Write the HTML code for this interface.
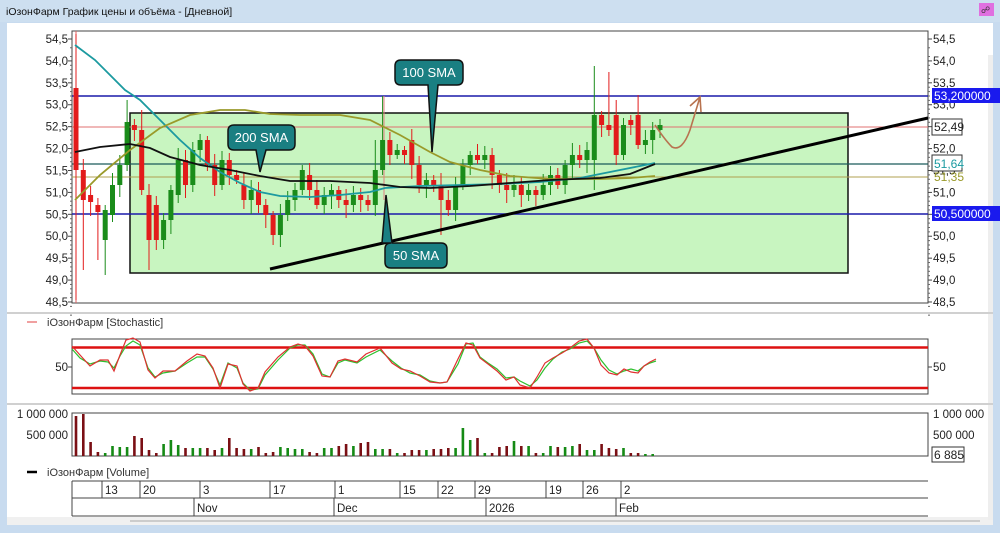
<!DOCTYPE html>
<html><head><meta charset="utf-8"><style>
body{margin:0;width:1000px;height:533px;overflow:hidden;background:#c8dbef;font-family:"Liberation Sans","Noto Sans CJK JP",sans-serif}
svg{display:block}
text{font-family:"Liberation Sans","DejaVu Sans",sans-serif}
</style></head><body>
<svg id="s" width="1000" height="533" viewBox="0 0 1000 533" xmlns="http://www.w3.org/2000/svg">
<rect x="0" y="0" width="1000" height="533" fill="#c8dbef"/>
<rect x="0" y="0" width="1000" height="22" fill="#cddff0"/>
<text x="6" y="15" font-size="10.5" fill="#111">iОзонФарм График цены и объёма - [Дневной]</text>
<rect x="979" y="3" width="15" height="13" fill="#e070e0"/>
<text x="981" y="13" font-size="9" fill="#333">☍</text>
<rect x="7" y="23" width="986" height="500" fill="#fff"/>
<rect x="7" y="517" width="986" height="8" fill="#f0f0f0"/>
<line x1="130" y1="521" x2="980" y2="521" stroke="#ccc" stroke-width="2"/>
<rect x="988" y="55" width="5" height="465" fill="#eee"/>
<line x1="7" y1="313" x2="993" y2="313" stroke="#d0d0d0" stroke-width="2"/>
<line x1="7" y1="404" x2="993" y2="404" stroke="#d0d0d0" stroke-width="2"/>
<g id="main"></g>
<g id="labels"></g>
</svg>
<script>
var S=document.getElementById('s'),M=document.getElementById('main');
var NS='http://www.w3.org/2000/svg';
function el(t,a,p,txt){var e=document.createElementNS(NS,t);for(var k in a)e.setAttribute(k,a[k]);if(txt!=null)e.textContent=txt;(p||M).appendChild(e);return e;}
// main plot
el('rect',{x:130,y:113,width:718,height:160,fill:'#c8f5c0',stroke:'#111','stroke-width':1.5});
el('rect',{x:72,y:31,width:856,height:272,fill:'none',stroke:'#444'});
function hl(y,c,w){el('line',{x1:72,y1:y,x2:928,y2:y,stroke:c,'stroke-width':w});}
hl(127,'#e07070',1);hl(96,'#1a1aaa',1.5);hl(214,'#1a1aaa',1.5);hl(164,'#1a5a5a',1.2);hl(177,'#b0a050',1);
el('line',{x1:76,y1:31,x2:76,y2:303,stroke:'#e06060','stroke-width':1});
el('line',{x1:384,y1:96,x2:384,y2:200,stroke:'#e08080','stroke-width':1});
// y axes
var vals=[54.5,54,53.5,53,52.5,52,51.5,51,50.5,50,49.5,49,48.5];
vals.forEach(function(v){var y=39+(54.5-v)*43.83;var s=v.toFixed(1).replace('.',',');
el('text',{x:68,y:y+4,'font-size':11.5,'text-anchor':'end',fill:'#222'},M,s);
el('text',{x:933,y:y+4,'font-size':11.5,fill:'#222'},M,s);
el('line',{x1:68,y1:y,x2:72,y2:y,stroke:'#444'});el('line',{x1:928,y1:y,x2:932,y2:y,stroke:'#444'});
for(var j=1;j<5&&v>48.5;j++){var yy=y+j*8.77;el('line',{x1:70,y1:yy,x2:72,y2:yy,stroke:'#666'});el('line',{x1:928,y1:yy,x2:930,y2:yy,stroke:'#666'});}
});
// candles
var c=[[88,170],[170,200],[195,202],[205,212],[240,210],[215,185],[185,165],[165,122],[125,130],[130,190],[195,240],[205,240],[240,220],[220,190],[195,160],[160,185],[185,150],[150,140],[140,165],[165,185],[185,160],[160,175],[175,180],[185,200],[200,190],[190,205],[205,215],[215,235],[235,215],[215,200],[200,190],[190,170],[175,190],[190,205],[205,195],[195,190],[190,200],[200,205],[205,195],[195,200],[200,205],[205,170],[170,140],[140,155],[155,150],[150,155],[140,165],[165,185],[185,180],[180,185],[185,200],[200,210],[210,185],[185,165],[165,155],[155,160],[160,155],[155,175],[175,185],[185,190],[190,185],[185,195],[195,190],[190,195],[195,185],[185,175],[175,185],[185,165],[165,155],[155,160],[160,150],[160,115],[115,125],[125,130],[115,155],[155,125],[120,125],[115,145],[145,140],[140,130],[130,125]];
var hi={0:34,7:100,9:110,41:140,42:96,71:66,73:72,74:100,77:95};
var lo={0:300,1:270,3:260,4:275,10:270,11:250,27:245,50:235,71:190,74:165};
c.forEach(function(b,i){var x=76+i*7.3;var up=b[1]<b[0];var col=up?'#1a8c1a':'#e21b1b';var t=Math.min(b[0],b[1]),bo=Math.max(b[0],b[1]);if(bo-t<2)bo=t+2;
var h=hi[i]||t-4-(i*7%9),l=lo[i]||bo+4+(i*5%11);
el('line',{x1:x,y1:h,x2:x,y2:l,stroke:col,'stroke-width':1});
el('rect',{x:x-2.5,y:t,width:5,height:bo-t,fill:col});});
// MAs
function pl(pts,col,w){el('polyline',{points:pts,fill:'none',stroke:col,'stroke-width':w});}
pl('75,45 95,60 110,75 125,90 140,100 160,120 180,140 200,158 220,172 240,183 260,192 280,196 310,197 340,195 370,192 385,188 420,186 460,185 500,184 540,182 580,178 610,172 640,166 655,163','#1c9aa0',1.8);
pl('75,200 100,175 130,150 160,128 190,115 220,110 245,110 270,114 300,115 340,115 370,120 400,135 430,152 450,162 480,170 510,176 550,179 600,179 630,178 655,176','#9a9a2a',1.8);
pl('75,152 100,147 130,144 150,148 170,157 200,165 230,170 260,176 290,181 330,181 370,183 400,187 430,188 470,186 510,183 550,180 600,178 630,174 655,164','#111',1.8);
// trend line
el('line',{x1:270,y1:269,x2:928,y2:118,stroke:'#000','stroke-width':3});
// callouts
function co(x,y,w,px,py,txt,down){var g='';var d;if(down){d='M'+(x+6)+','+y+' h'+(w-12)+' q6,0 6,6 v13 q0,6 -6,6 H'+(px+6)+' L'+px+','+py+' L'+(px-4)+','+(y+25)+' H'+(x+6)+' q-6,0 -6,-6 v-13 q0,-6 6,-6z';}
else{d='M'+(x+6)+','+y+' H'+(px-4)+' L'+px+','+py+' L'+(px+6)+','+y+' H'+(x+w-6)+' q6,0 6,6 v13 q0,6 -6,6 H'+(x+6)+' q-6,0 -6,-6 v-13 q0,-6 6,-6z';}
el('path',{d:d,fill:'#1a7f82',stroke:'#111','stroke-width':1.5});
el('text',{x:x+w/2,y:y+17,'font-size':13,'text-anchor':'middle',fill:'#fff'},M,txt);}
co(228,125,67,260,172,'200 SMA',true);
co(395,60,68,432,152,'100 SMA',true);
co(385,243,62,386,195,'50 SMA',false);
// brown arrow
el('path',{d:'M655,125 Q665,140 672,147 Q682,152 690,130 L700,97 M690,106 L700,97 L701,112',fill:'none',stroke:'#b87350','stroke-width':1.6});
// right labels
function rl(y,txt,bg,fg,bd){el('rect',{x:932,y:y-8,width:bd?48:68,height:15,fill:bg,stroke:bd||'none'});el('text',{x:934,y:y+4,'font-size':12,fill:fg},M,txt);}
rl(96,'53,200000','#1a1aee','#fff');rl(214,'50,500000','#1a1aee','#fff');
el('rect',{x:932,y:119,width:30,height:16,fill:'#fff',stroke:'#333'});el('text',{x:934,y:131,'font-size':12,fill:'#222'},M,'52,49');
el('rect',{x:932,y:155,width:30,height:16,fill:'#fff',stroke:'#333'});el('text',{x:934,y:168,'font-size':12,fill:'#1a9aa0'},M,'51,64');
el('text',{x:934,y:181,'font-size':12,fill:'#9a9a2a'},M,'51,35');
// stochastic
el('line',{x1:27,y1:322,x2:37,y2:322,stroke:'#e04040'});
el('text',{x:47,y:326,'font-size':11,fill:'#333'},M,'iОзонФарм [Stochastic]');
el('rect',{x:72,y:339,width:856,height:55,fill:'none',stroke:'#444'});
el('line',{x1:72,y1:347.5,x2:928,y2:347.5,stroke:'#dd1111','stroke-width':2.5});
el('line',{x1:72,y1:388,x2:928,y2:388,stroke:'#dd1111','stroke-width':2.5});
el('text',{x:68,y:371,'font-size':11.5,'text-anchor':'end',fill:'#222'},M,'50');
el('text',{x:933,y:371,'font-size':11.5,fill:'#222'},M,'50');
el('line',{x1:68,y1:367,x2:72,y2:367,stroke:'#444'});el('line',{x1:928,y1:367,x2:932,y2:367,stroke:'#444'});
var st='72,349 80,358 90,364 100,361 108,362 114,368 120,356 126,346 133,341 140,345 148,368 155,377 163,373 175,371 187,363 197,357 205,357 213,369 220,385 228,363 237,368 243,383 250,390 258,389 265,375 278,360 290,348 298,345 305,345 313,354 322,374 330,377 338,363 345,360 357,363 366,357 380,350 392,361 401,368 410,373 420,375 430,381 440,383 447,382 458,364 466,344 473,343 480,357 488,363 497,369 506,378 514,377 520,381 530,386 537,380 545,368 553,359 562,352 570,349 579,343 587,341 594,348 601,360 609,370 617,374 624,371 631,369 638,371 644,366 650,363 656,361';
pl(st,'#2ec02e',1.2);
var st2='72,346 80,355 90,366 100,360 108,360 114,371 120,355 126,340 133,338 140,342 148,370 155,378 163,371 175,371 187,361 197,354 205,356 213,368 220,388 228,364 237,366 243,384 250,391 258,388 265,372 278,357 290,347 298,344 305,346 313,356 322,376 330,377 338,361 345,359 357,362 366,354 380,348 392,363 401,369 410,371 420,376 430,382 440,383 447,382 458,359 466,343 473,345 480,358 488,364 497,371 506,380 514,377 520,385 530,388 537,377 545,363 553,358 562,353 570,348 579,341 587,339 594,348 601,365 609,373 617,375 624,369 631,372 638,373 644,366 650,362 656,359';
pl(st2,'#e03030',1.2);
// volume
el('rect',{x:72,y:413,width:856,height:43,fill:'none',stroke:'#444'});
[['1 000 000',414],['500 000',435]].forEach(function(a){el('text',{x:68,y:a[1]+4,'font-size':11.5,'text-anchor':'end',fill:'#222'},M,a[0]);el('text',{x:933,y:a[1]+4,'font-size':11.5,fill:'#222'},M,a[0]);});
el('rect',{x:932,y:447,width:32,height:15,fill:'#fff',stroke:'#333'});el('text',{x:934,y:459,'font-size':12,fill:'#222'},M,'6 885');
var vh=[40,42,14,4,3,10,9,9,20,18,6,3,12,16,11,8,8,8,8,6,8,18,8,7,7,9,3,4,9,8,7,7,4,3,8,8,10,12,10,13,14,7,7,7,3,3,6,6,6,7,7,8,8,28,16,18,3,3,9,10,15,10,10,3,3,10,9,9,10,12,6,6,12,8,7,8,3,3,2,2];
vh.forEach(function(h,i){var x=76+i*7.3;var b=c[i];var up=b&&b[1]<b[0];el('rect',{x:x-1.3,y:456-h,width:2.6,height:h,fill:up?'#158a15':'#7a0f14'});});
// volume legend
el('line',{x1:27,y1:472,x2:37,y2:472,stroke:'#000','stroke-width':2.5});
el('text',{x:47,y:476,'font-size':11,fill:'#333'},M,'iОзонФарм [Volume]');
// date axis
el('line',{x1:72,y1:481,x2:928,y2:481,stroke:'#444'});el('line',{x1:72,y1:498,x2:928,y2:498,stroke:'#444'});el('line',{x1:72,y1:516,x2:928,y2:516,stroke:'#444'});
el('line',{x1:72,y1:481,x2:72,y2:516,stroke:'#444'});
[[102,'13'],[140,'20'],[200,'3'],[270,'17'],[335,'1'],[400,'15'],[438,'22'],[475,'29'],[546,'19'],[583,'26'],[621,'2']].forEach(function(d){el('line',{x1:d[0],y1:481,x2:d[0],y2:498,stroke:'#444'});el('text',{x:d[0]+3,y:494,'font-size':11.5,fill:'#222'},M,d[1]);});
[[194,'Nov'],[334,'Dec'],[486,'2026'],[616,'Feb']].forEach(function(d){el('line',{x1:d[0],y1:498,x2:d[0],y2:516,stroke:'#444'});el('text',{x:d[0]+3,y:512,'font-size':11.5,fill:'#222'},M,d[1]);});
</script>
</body></html>
